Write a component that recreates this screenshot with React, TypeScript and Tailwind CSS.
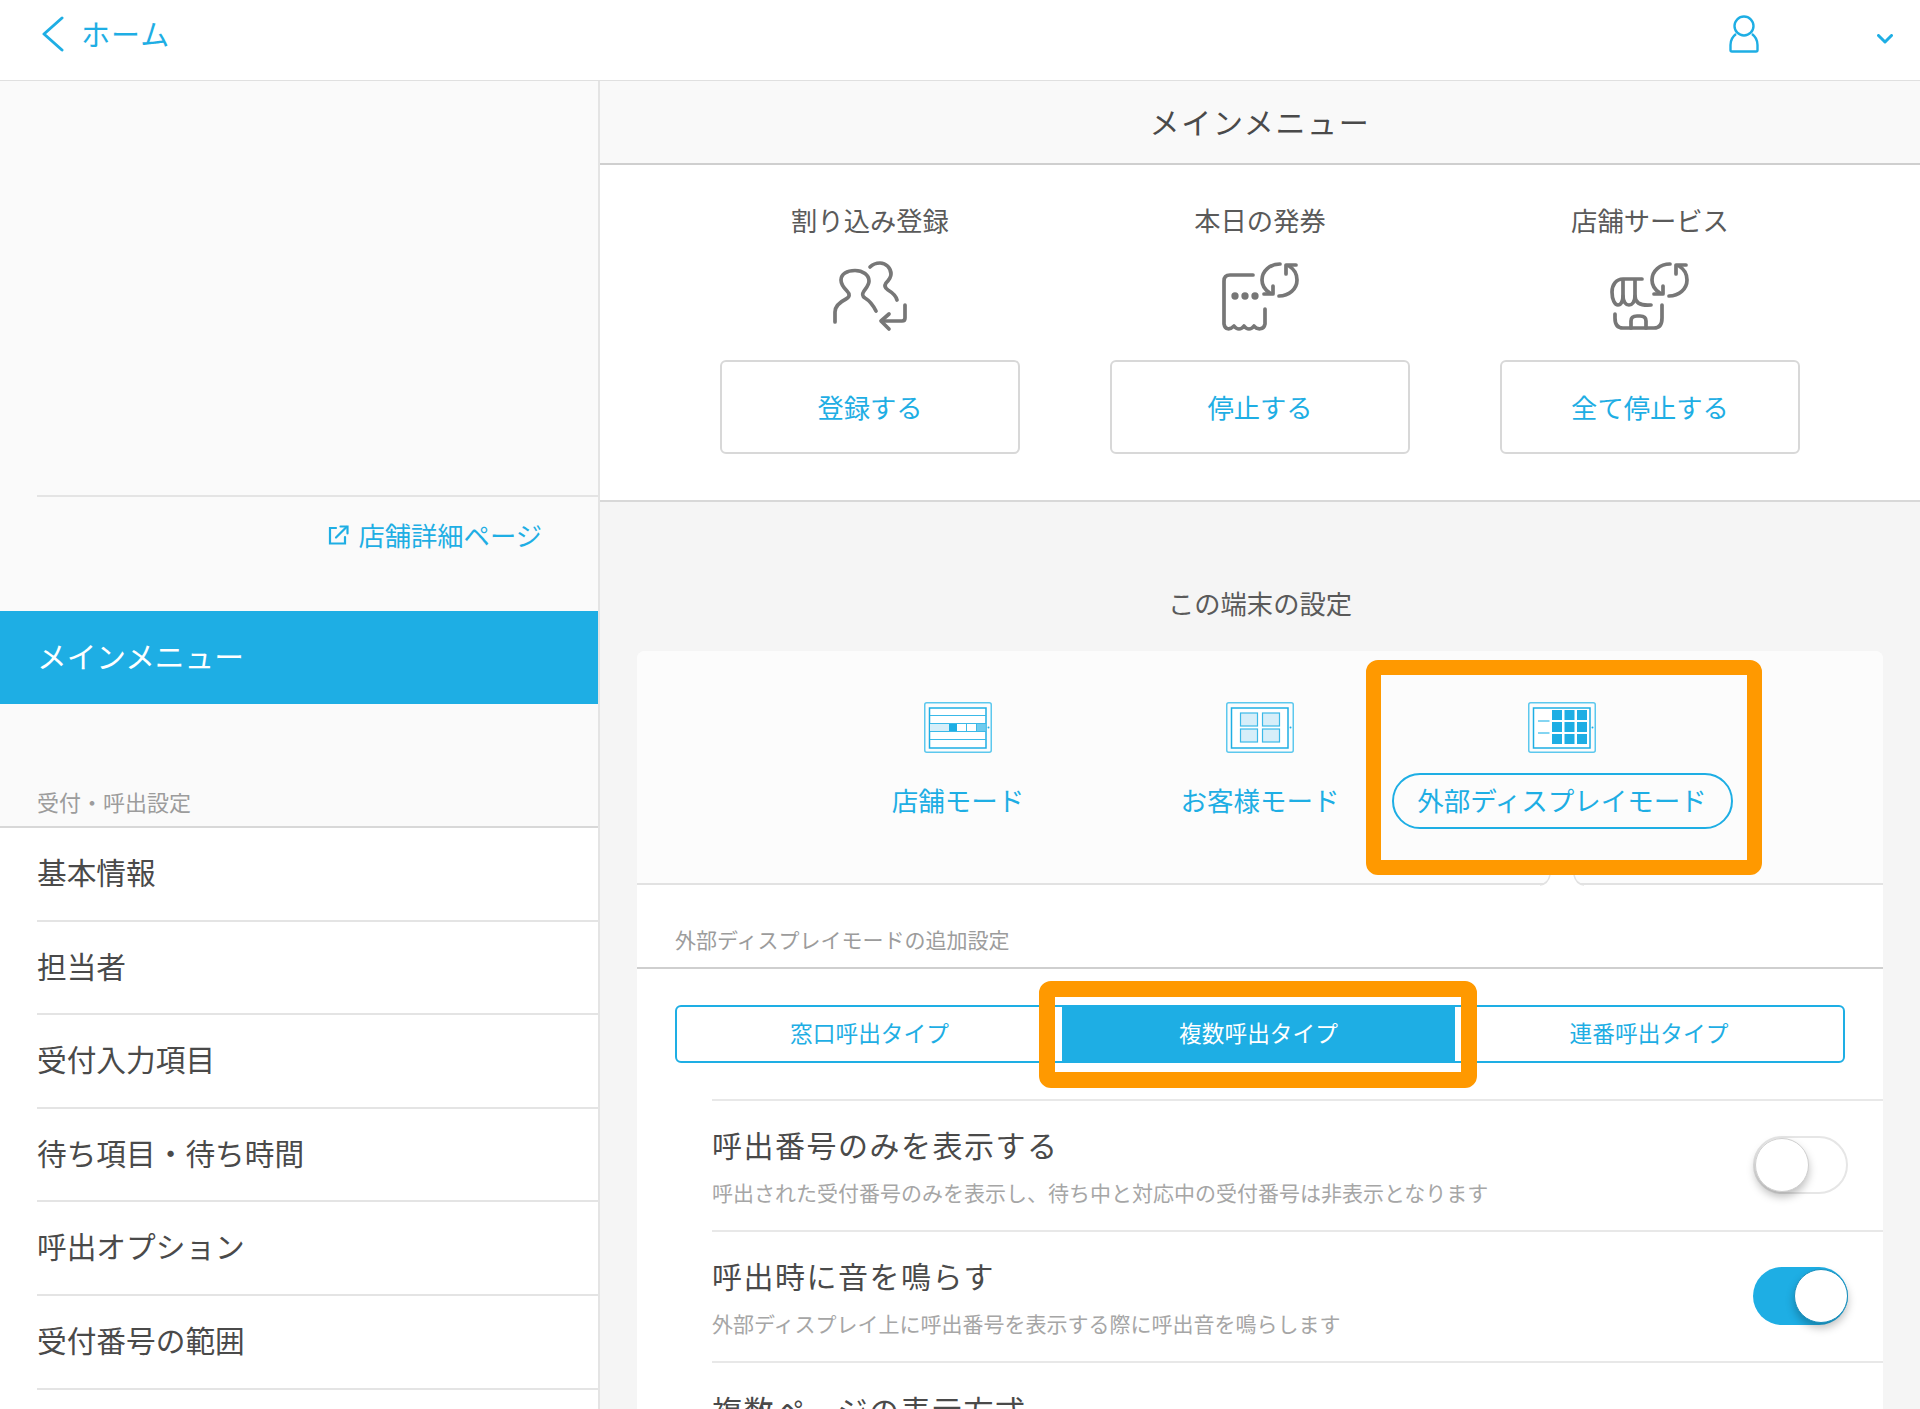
import { ReactNode } from 'react';

const blue = '#1eaee4';

const menuItems = ['基本情報', '担当者', '受付入力項目', '待ち項目・待ち時間', '呼出オプション', '受付番号の範囲'];

function ActionIcon({ view, children }: { view: string; children: ReactNode }) {
  return (
    <svg
      width="110"
      height="90"
      viewBox={view}
      fill="none"
      stroke="#777"
      strokeWidth="3.700"
      strokeLinecap="round"
      strokeLinejoin="round"
    >
      {children}
    </svg>
  );
}

function Refresh({ dx = 0 }: { dx?: number }) {
  return (
    <g transform={`translate(${dx} 0)`}>
      <path d="M70 14C60 14 52 21 52 30C52 35 55 40 60 43" />
      <path d="M63 36V44H54" />
      <path d="M69 46C79 46 87 39 87 30C87 24 84 19 79 16" />
      <path d="M76 24V15H86" />
    </g>
  );
}

const UsersIcon = (
  <ActionIcon view="5 0 110 90">
    <path d="M25 72V62C25 56 30 52 36 49C40 47 40 44 37 41C33 37 31 34 31 30C31 24 37 20.500 45 20.500C53 20.500 59 25 59 31C59 35 56 38 54 41C52 44 52 46 55 48C60 51 63 55 66 61" />
    <path d="M60 17C63 14 67 13 70 13C76 13 81 18 81 24C81 28 79 30 76 33C74 36 75 38 78 40C83 43 86 46 87 50" />
    <path d="M95 55V68Q95 71 92 71H72" />
    <path d="M79 64L71 71L79 79" />
  </ActionIcon>
);

const TicketIcon = (
  <ActionIcon view="-5 0 110 90">
    <path d="M43 25H20Q14 25 14 31V74C15 80 20 80 24 76C27 80 31 80 34 76C37 80 41 80 44 76C47 80 54 80 55 74V59" />
    <circle cx="25" cy="46" r="1.800" />
    <circle cx="35" cy="46" r="1.800" />
    <circle cx="45" cy="46" r="1.800" />
    <Refresh />
  </ActionIcon>
);

const ShopIcon = (
  <ActionIcon view="-4 0 110 90">
    <path d="M43 29H24C17 29 13 35 13 42C13 50 16 55 19 55C22 55 24 51 24 46V30" />
    <path d="M24 46C24 52 27 55 30 55C33 55 36 52 36 46V30" />
    <path d="M36 46C36 52 40 56 52 55" />
    <path d="M16 64V68Q16 78 24 78H55Q63 78 63 68V55" />
    <path d="M32 78V71Q32 66 38 66H41Q47 66 47 71V78" />
    <Refresh dx={1} />
  </ActionIcon>
);

function Tablet({ children }: { children: ReactNode }) {
  return (
    <svg width="68" height="51" viewBox="0 0 68 51" fill="none">
      <rect x="0.750" y="0.750" width="66.500" height="49.500" rx="2" stroke="#5cc8ee" strokeWidth="1.500" />
      <rect x="5.500" y="6" width="56.500" height="40" fill="#fff" stroke={blue} strokeWidth="1.500" />
      <circle cx="64.500" cy="25.500" r="1" fill={blue} />
      {children}
    </svg>
  );
}

const StoreModeIcon = (
  <Tablet>
    <path d="M6 13.500H62M6 21.500H62M6 29.500H62M6 37.500H62" stroke="#3bb9e8" strokeWidth="1.200" />
    <rect x="6" y="22" width="19" height="7" fill="#d6eef9" />
    <rect x="25" y="22" width="8" height="7" fill={blue} />
    <rect x="52.500" y="22" width="9" height="7" fill="#6fcbee" />
    <path d="M42.500 22V29M52.500 22V29" stroke="#3bb9e8" strokeWidth="1" />
  </Tablet>
);

const CustomerModeIcon = (
  <Tablet>
    {[
      [14.500, 11],
      [36.500, 11],
      [14.500, 27],
      [36.500, 27],
    ].map(([x, y]) => (
      <rect key={`${x}-${y}`} x={x} y={y} width="17" height="13" fill="#d6eef9" stroke="#3bb9e8" strokeWidth="1.200" />
    ))}
  </Tablet>
);

const DisplayModeIcon = (
  <Tablet>
    <path d="M10 19H21.500M10 31H21.500" stroke="#5cc8ee" strokeWidth="1.500" />
    {[24, 36.500, 49].flatMap((x) =>
      [8, 20, 32].map((y) => <rect key={`${x}-${y}`} x={x} y={y} width="10" height="10" fill={blue} />)
    )}
  </Tablet>
);

function Toggle({ on }: { on: boolean }) {
  return (
    <div
      className={`-mt-[1px] flex h-[58px] w-[95px] items-center rounded-full ${
        on ? 'justify-end bg-[#1eaee4]' : 'justify-start border-2 border-[#e6e6e6] bg-white'
      }`}
    >
      <div
        className={`h-[54px] w-[54px] shrink-0 rounded-full bg-white shadow-[0_5px_8px_rgba(0,0,0,0.25)] ${
          on ? 'border border-[#1a8fbc]' : 'border border-[#cfcfcf]'
        }`}
      />
    </div>
  );
}

function SettingRow({ title, note, on }: { title: string; note: string; on: boolean }) {
  return (
    <div className="flex h-[131px] items-center justify-between border-t-2 border-[#e8e8e8] pr-[35px]">
      <div>
        <div className="text-[30px] leading-[40px] tracking-[1.500px] text-[#4a4a4a]">{title}</div>
        <div className="mt-[13px] text-[21px] leading-[30px] text-[#a6a6a6]">{note}</div>
      </div>
      <Toggle on={on} />
    </div>
  );
}

export default function App() {
  return (
    <div className="flex h-[1409px] flex-col overflow-hidden bg-white font-['Noto_Sans_CJK_JP',sans-serif] font-normal">
      {/* Header */}
      <header className="flex h-[81px] shrink-0 items-center justify-between border-b border-[#e0e0e0] pb-[12px] pl-[42px] pr-[27px]">
        <div className="flex items-center">
          <svg width="22" height="36" viewBox="0 0 22 36" fill="none" stroke={blue} strokeWidth="3" strokeLinecap="round" strokeLinejoin="round">
            <path d="M20 2L2 18L20 34" />
          </svg>
          <span className="ml-[17px] text-[29px] tracking-[1px] text-[#1eaee4]">ホーム</span>
        </div>
        <div className="flex items-center gap-[118px]">
          <svg width="30" height="38" viewBox="0 0 30 38" fill="none" stroke={blue} strokeWidth="2.400" strokeLinejoin="round">
            <circle cx="15" cy="11" r="9.500" />
            <path d="M7 19C3 22 1.500 26 1.500 30V35Q1.500 36.500 3 36.500H27Q28.500 36.500 28.500 35V30C28.500 26 27 22 23 19" />
          </svg>
          <svg className="mt-[10px]" width="16" height="10" viewBox="0 0 16 10" fill="none" stroke={blue} strokeWidth="3" strokeLinecap="round" strokeLinejoin="round">
            <path d="M1.500 1.500L8 8L14.500 1.500" />
          </svg>
        </div>
      </header>

      <div className="flex min-h-0 flex-1">
        {/* Sidebar */}
        <aside className="w-[600px] shrink-0 border-r-2 border-[#e4e4e4]">
          <div className="bg-[#fafafa]">
            <div className="ml-[37px] h-[416px] border-b-2 border-[#e4e4e4]" />
            <div className="flex h-[114px] items-start justify-end pr-[56px] pt-[20px]">
              <div className="flex items-center gap-[9px] text-[26.300px] leading-[36px] text-[#1eaee4]">
                <svg width="21" height="20" viewBox="0 0 21 20" fill="none" stroke={blue} strokeWidth="2.200" strokeLinecap="round">
                  <path d="M8 3H2V18.500H17V12" />
                  <path d="M8 12.500L18.500 2" />
                  <path d="M12.500 1.500H19.500V8.500" />
                </svg>
                店舗詳細ページ
              </div>
            </div>
            <div className="flex h-[93px] items-center bg-[#1eaee4] pb-[3px] pl-[37px] text-[29.700px] text-white">メインメニュー</div>
            <div className="h-[124px] border-b-2 border-[#d8d8d8] pl-[37px] pt-[82px] text-[22px] leading-[30px] text-[#9c9c9c]">
              受付・呼出設定
            </div>
          </div>
          {menuItems.map((item) => (
            <div key={item} className="ml-[37px] flex h-[93.600px] items-center border-b-2 border-[#e4e4e4] pb-[3px] text-[29.700px] text-[#4a4a4a]">
              {item}
            </div>
          ))}
        </aside>

        <main className="flex min-w-0 flex-1 flex-col">
          {/* Main menu */}
          <div className="flex h-[84px] shrink-0 items-center justify-center border-b-2 border-[#cfcfcf] bg-[#f9f9f9] pb-[2px] text-[30px] tracking-[1.700px] text-[#4a4a4a]">
            メインメニュー
          </div>
          <section className="flex h-[337px] shrink-0 justify-center gap-[90px] border-b-2 border-[#d8d8d8] pt-[37px]">
            {[
              { label: '割り込み登録', icon: UsersIcon, action: '登録する' },
              { label: '本日の発券', icon: TicketIcon, action: '停止する' },
              { label: '店舗サービス', icon: ShopIcon, action: '全て停止する' },
            ].map((col) => (
              <div key={col.label} className="flex w-[300px] flex-col items-center">
                <div className="text-[26.300px] leading-[36px] text-[#5a5a5a]">{col.label}</div>
                <div className="mt-[12px] h-[90px]">{col.icon}</div>
                <div className="mt-[20px] flex h-[94px] w-full items-center justify-center rounded-md border-2 border-[#d8d8d8] text-[26.300px] text-[#1eaee4]">
                  {col.action}
                </div>
              </div>
            ))}
          </section>

          {/* Device settings */}
          <section className="flex-1 bg-[#f5f5f5] px-[37px] pt-[85px]">
            <div className="text-center text-[26.300px] leading-[32px] text-[#5a5a5a]">この端末の設定</div>
            <div className="mt-[32px] rounded-t-lg bg-white">
              <div className="relative h-[234px] rounded-t-lg border-b-2 border-[#e2e2e2] bg-[#fcfcfc]">
                <div className="flex justify-center pt-[51px]">
                  {[
                    { label: '店舗モード', icon: StoreModeIcon, active: false },
                    { label: 'お客様モード', icon: CustomerModeIcon, active: false },
                    { label: '外部ディスプレイモード', icon: DisplayModeIcon, active: true },
                  ].map((mode) => (
                    <div key={mode.label} className="flex w-[302px] flex-col items-center">
                      {mode.icon}
                      <div
                        className={`mt-[20px] flex h-[56px] w-[341px] shrink-0 items-center justify-center rounded-full pb-[3px] text-[26.500px] text-[#1eaee4] ${
                          mode.active ? 'border-2 border-[#1eaee4]' : ''
                        }`}
                      >
                        {mode.label}
                      </div>
                    </div>
                  ))}
                </div>
                <svg className="absolute left-[903px] top-[224px]" width="44" height="12" viewBox="0 0 44 12">
                  <path d="M0 10Q8 9 10 0H34Q36 9 44 10V12H0Z" fill="#fff" />
                  <path d="M0 10Q8 9 10 0M34 0Q36 9 44 10" fill="none" stroke="#e2e2e2" strokeWidth="1.500" />
                </svg>
                <div className="absolute left-[729px] top-[9px] h-[215px] w-[396px] rounded-xl border-[15px] border-[#ff9900]" />
              </div>

              <div className="h-[84px] border-b-2 border-[#cfcfcf] pl-[38px] pt-[39px] text-[21px] leading-[30px] text-[#9c9c9c]">
                外部ディスプレイモードの追加設定
              </div>

              <div className="relative mx-[38px] mt-[36px] grid h-[58px] grid-cols-[385px_393px_1fr] rounded-md border-2 border-[#1eaee4] text-[22.700px] text-[#1eaee4]">
                <div className="flex items-center justify-center pb-[2px]">窓口呼出タイプ</div>
                <div className="flex items-center justify-center bg-[#1eaee4] pb-[2px] text-white">複数呼出タイプ</div>
                <div className="flex items-center justify-center pb-[2px]">連番呼出タイプ</div>
                <div className="absolute left-[362px] top-[-26px] h-[107px] w-[438px] rounded-xl border-[16px] border-[#ff9900]" />
              </div>

              <div className="ml-[75px] mt-[36px]">
                <SettingRow title="呼出番号のみを表示する" note="呼出された受付番号のみを表示し、待ち中と対応中の受付番号は非表示となります" on={false} />
                <SettingRow title="呼出時に音を鳴らす" note="外部ディスプレイ上に呼出番号を表示する際に呼出音を鳴らします" on={true} />
                <div className="border-t-2 border-[#e8e8e8] pt-[26px] text-[30px] leading-[40px] tracking-[1.500px] text-[#4a4a4a]">
                  複数ページの表示方式
                </div>
              </div>
            </div>
          </section>
        </main>
      </div>
    </div>
  );
}
